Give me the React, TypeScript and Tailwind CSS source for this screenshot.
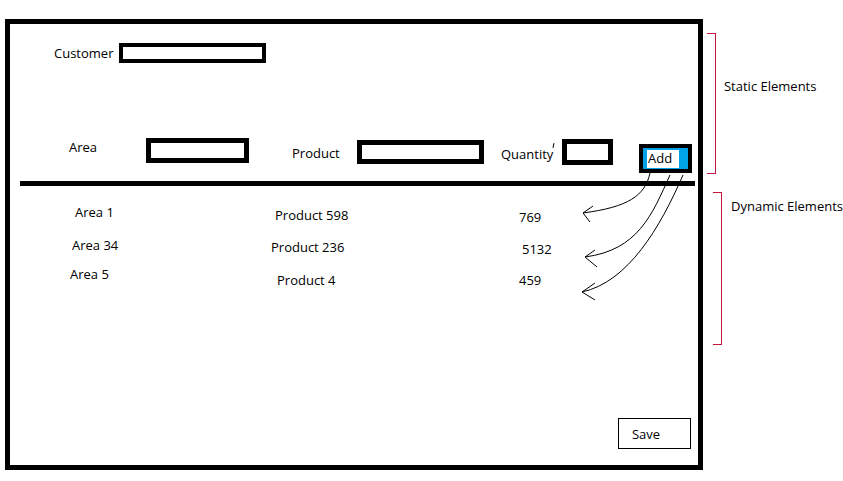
import React from "react";

const rows = [
  { area: "Area 1", product: "Product 598", qty: "769", mt: "mt-[17px]", cells: ["ml-[65px] mt-0 w-[200px]", "mt-[3px] w-[244px]", "mt-[5px]"] },
  { area: "Area 34", product: "Product 236", qty: "5132", mt: "mt-[10px]", cells: ["ml-[62px] mt-0 w-[199px]", "mt-[2px] w-[251px]", "mt-[4px]"] },
  { area: "Area 5", product: "Product 4", qty: "459", mt: "mt-[7px]", cells: ["ml-[60px] mt-0 w-[207px]", "mt-[6px] w-[242px]", "mt-[6px]"] },
];

function Arrows() {
  return (
    <svg className="absolute inset-0 pointer-events-none" width="843" height="481" fill="none" stroke="black" strokeWidth="1">
      <path d="M650 173 C645 196 628 207 583 213" />
      <path d="M583 213 L593 206 M583 213 L590 222" />
      <path d="M670 175 C652 215 638 250 585 257" />
      <path d="M585 257 L595 250 M585 257 L597 267" />
      <path d="M683 175 C660 228 628 282 582 292" />
      <path d="M582 292 L595 283 M582 292 L595 300" />
    </svg>
  );
}

function Bracket({ h }: { h: string }) {
  return (
    <div className={`flex flex-col items-end w-[9px] ${h}`}>
      <div className="w-full h-px bg-[#c0163e]" />
      <div className="flex-1 w-px bg-[#c0163e]" />
      <div className="w-full h-px bg-[#c0163e]" />
    </div>
  );
}

export default function App() {
  return (
    <div className="relative w-[843px] h-[481px] bg-white text-black text-[13px] leading-[18px] font-['Open_Sans',sans-serif] flex pt-[19px] pl-[5px]">
      {/* the mockup frame */}
      <div className="w-[698px] h-[451px] border-[5px] border-black flex flex-col">
        <div className="flex items-center pl-[44px] pt-[19px]">
          <span className="w-[65px]">Customer</span>
          <div className="w-[147px] h-[20px] border-4 border-black" />
        </div>

        <div className="flex items-start mt-[75px]">
          <span className="ml-[59px] w-[77px]">Area</span>
          <div className="w-[103px] h-[25px] border-[5px] border-black" />
          <span className="ml-[43px] mt-[6px] w-[65px]">Product</span>
          <div className="mt-[2px] w-[127px] h-[24px] border-[5px] border-black" />
          <span className="relative ml-[17px] mt-[7px] w-[61px]">
            Quantity
            <span className="absolute left-[52px] -top-[2px] w-px h-[5px] bg-black rotate-12" />
          </span>
          <div className="mt-[1px] w-[51px] h-[26px] border-[5px] border-black" />
          <div className="ml-[26px] mt-[6px] w-[53px] h-[29px] border-4 border-black bg-[#00a2e8] pl-[4px] pr-[9px] pt-[2px] pb-[1px]">
            <div className="h-full bg-white pl-[1px] leading-[17px]">Add</div>
          </div>
        </div>

        <div className="ml-[10px] mt-[8px] w-[675px] h-[5px] bg-black" />

        {rows.map((r) => (
          <div key={r.area} className={`flex items-start ${r.mt}`}>
            <span className={r.cells[0]}>{r.area}</span>
            <span className={r.cells[1]}>{r.product}</span>
            <span className={r.cells[2]}>{r.qty}</span>
          </div>
        ))}

        <div className="mt-auto self-end mr-[7px] mb-[16px] w-[73px] h-[31px] border border-black flex items-center pl-[13px]">
          Save
        </div>
      </div>

      {/* annotations */}
      <div className="flex flex-col">
        <div className="flex items-start mt-[14px] ml-[4px]">
          <Bracket h="h-[141px]" />
          <span className="ml-[8px] mt-[44px]">Static Elements</span>
        </div>
        <div className="flex items-start mt-[18px] ml-[10px]">
          <Bracket h="h-[153px]" />
          <span className="ml-[9px] mt-[5px]">Dynamic Elements</span>
        </div>
      </div>

      <Arrows />
    </div>
  );
}
